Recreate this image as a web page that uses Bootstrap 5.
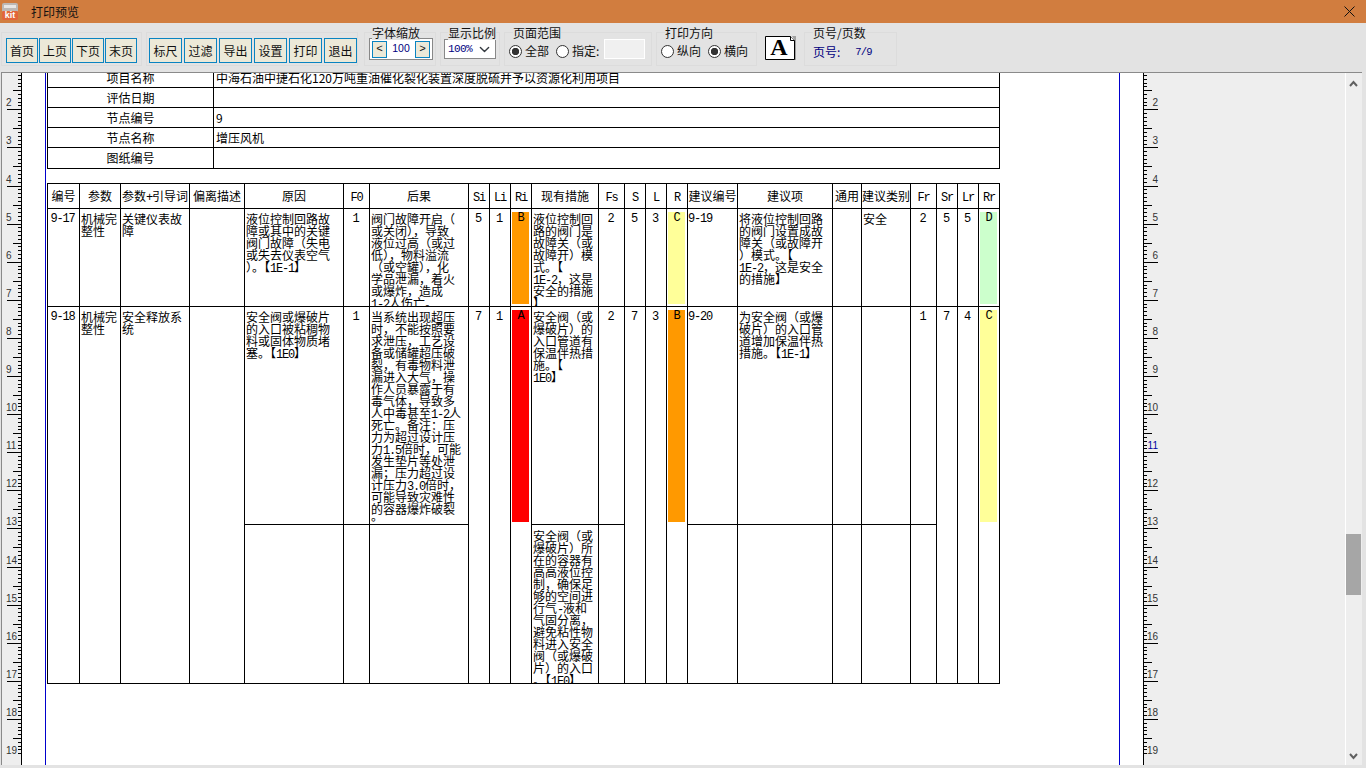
<!DOCTYPE html>
<html lang="zh-CN">
<head>
<meta charset="utf-8">
<title>打印预览</title>
<link href="https://cdn.jsdelivr.net/npm/bootstrap@5.3.0/dist/css/bootstrap.min.css" rel="stylesheet">
<style>
html,body{height:768px;overflow:hidden}
body{background:#e3e3e3;color:#111;font:12px/16px "Noto Sans CJK SC",sans-serif;width:1366px}
.titlebar{height:23px;background:#d17d3f}
.kit-i{margin-left:2px}
.titlebar .ttl{margin-left:13px}
.kit-x{margin-left:auto;margin-right:11px}
.toolbar{height:49px;padding:9px 0 0 1px}
.grp{position:relative;height:34px;border:1px solid #dcdcdc}
.grp-legend{position:absolute;top:-7px;background:#e3e3e3;line-height:14px;white-space:nowrap;color:#111}
.g1{width:141px;margin-right:4px;padding-left:4px;gap:1px}
.g2{width:212px;margin-right:6px;padding-left:2px;gap:2px}
.g3{width:72px;margin-right:4px;padding-left:4px}
.g4{width:60px;margin-right:4px;padding-left:3px}
.g5{width:148px;margin-right:4px;padding-left:4px}
.g6{width:101px;margin-right:8px;padding-left:4px}
.g7{width:93px;margin-left:7px;padding:11px 0 0 8px;color:#000080}
.g-a{width:32px;margin-top:4px;height:25px}
.lg3{left:7px}.lg4{left:7px}.lg5{left:8px}.lg6{left:8px}.lg7{left:8px}
.tbtn{--bs-btn-padding-x:0;--bs-btn-padding-y:0;--bs-btn-font-size:12px;--bs-btn-border-radius:0;--bs-btn-color:#111;--bs-btn-bg:#ece9d8;--bs-btn-border-color:#0a84c1;--bs-btn-line-height:1;height:25px;margin-top:5px;flex:none}
.tw32{width:32px}.tw33{width:33px}
.zoombox{width:64px;height:22px;margin-top:5px;border:1px solid #888;background:#fff;padding:2px;color:#000080;font:10.5px/14px "Liberation Sans",sans-serif}
.zbtn{--bs-btn-padding-x:0;--bs-btn-padding-y:0;--bs-btn-font-size:11px;--bs-btn-border-radius:0;--bs-btn-color:#111;--bs-btn-bg:#ece9d8;--bs-btn-border-color:#0a84c1;width:15px;height:17px;line-height:13px;font-family:"Liberation Mono",monospace}
.pct{width:52px;height:20px;margin-top:6px;padding:0 0 0 3px;border:1px solid #888;border-radius:0;font:11px/18px "Liberation Mono",monospace;letter-spacing:-.6px;color:#000080;background-position:right 5px center;background-size:11px}
.rd{width:13px;height:13px;margin:0;flex:none;border:1px solid #333;background-color:#fff}
.rd:checked{background-color:#fff;border-color:#333;background-image:radial-gradient(circle,#333 3.4px,transparent 4px)}
.rd:focus{box-shadow:none;border-color:#333}
.rdrow{margin-top:10px;height:16px}
.spec{width:41px;height:20px;padding:0;margin:6px 0 0 5px;background:#f0f0f0;border:1px solid #fff;border-radius:0}
.rg3{gap:3px}.rgap{margin-right:4px}
.pgno{margin-left:15px;font:10.5px/16px "Liberation Mono",monospace;letter-spacing:-.8px}
.viewer{margin-left:1px;width:1361px;height:693px;border-top:1px solid #8a8a8a;border-left:1px solid #8a8a8a;overflow:hidden;background:#eee}
.ruler-l{width:20px;flex:none}
.ruler-r{width:202px;flex:none}
.ruler-l svg,.ruler-r svg{display:block}
.rtxt{font:10px "Liberation Sans",sans-serif;fill:#333}
.sheet{width:1121px;flex:none;background:#fff;overflow:hidden}
.pagebox{width:1075px;height:760px;margin:-6px 0 0 23px;padding-left:1px;border-left:1px solid #00c;border-right:1px solid #00c}
.vscroll{width:17px;flex:none;border-left:1px solid #fff;padding-top:7px}
.vscroll svg{display:block;margin-left:3px}
.thumb{width:15px;height:61px;margin:447px 0 158px;background:#a6a6a6}
table.rpt{table-layout:fixed;border-collapse:collapse;width:953px;color:#000}
table.rpt td{border:1px solid #000;padding:0;vertical-align:top;white-space:nowrap;line-height:12px}
table.info{margin-bottom:14px;line-height:16px}
table.info td{height:20px;vertical-align:middle;line-height:16px}
table.info tr:last-child td{height:21px}
table.info td+td{padding-left:2px}
table.main tr.hd td{height:25px;vertical-align:middle;text-align:center}
.lt{font:12px/12px "Liberation Mono",monospace;letter-spacing:-1.2px}
span.lt{line-height:0}
.cb{overflow:hidden;padding:4px 0 0 1px}
.cb.lt{padding-left:0}
.cb.ctr{padding-right:2px}
.tall1 .cb{height:97px}
.tall2 .cb{height:217px}
.tall3 .cb{height:158px;padding-top:5px}
.enddot{vertical-align:5px;line-height:0}
.ctr{text-align:center}
.bar{margin:3px 2px 0 1px;text-align:center}
.tall1 .bar{height:92px}
.tall2 .bar{height:212px}
.c-a{background:#f00}.c-b{background:#f90}.c-c{background:#ff9}.c-d{background:#cfc}
tr.tall2 td.open{border-bottom:0}
tr.tall3 td.open{border-top:0}
</style>
</head>
<body>
<div class="titlebar d-flex align-items-center">
  <svg class="kit-i" width="16" height="17" viewBox="0 0 16 17"><rect x="0" y="0" width="16" height="17" rx="2" fill="#bdb8b4"/><rect x="2" y="2" width="12" height="3" fill="#e8e6e4"/><rect x="0" y="8" width="16" height="9" rx="1" fill="#e2653a"/><text x="8" y="15" text-anchor="middle" font-family="Liberation Sans" font-weight="700" font-size="9" fill="#fff">kit</text></svg>
  <span class="ttl">打印预览</span>
  <svg class="kit-x" width="11" height="11" viewBox="0 0 11 11"><path d="M.5.5l10 10M10.5.5l-10 10" stroke="#111" fill="none"/></svg>
</div>

<div class="toolbar d-flex">
  <div class="grp g1 d-flex">
    <button class="btn tbtn tw32">首页</button><button class="btn tbtn tw32">上页</button><button class="btn tbtn tw32">下页</button><button class="btn tbtn tw32">末页</button>
  </div>
  <div class="grp g2 d-flex">
    <button class="btn tbtn tw33">标尺</button><button class="btn tbtn tw33">过滤</button><button class="btn tbtn tw33">导出</button><button class="btn tbtn tw33">设置</button><button class="btn tbtn tw33">打印</button><button class="btn tbtn tw33">退出</button>
  </div>
  <div class="grp g3">
    <span class="grp-legend lg3">字体缩放</span>
    <div class="zoombox d-flex justify-content-between">
      <button class="btn zbtn">&lt;</button><span>100</span><button class="btn zbtn">&gt;</button>
    </div>
  </div>
  <div class="grp g4">
    <span class="grp-legend lg4">显示比例</span>
    <select class="form-select pct"><option>100%</option></select>
  </div>
  <div class="grp g5 d-flex">
    <span class="grp-legend lg5">页面范围</span>
    <div class="rdrow d-flex align-items-center rg3">
      <input class="form-check-input rd" type="radio" name="pr" checked><span class="rgap">全部</span>
      <input class="form-check-input rd" type="radio" name="pr"><span>指定:</span>
    </div>
    <input class="form-control spec" type="text">
  </div>
  <div class="grp g6">
    <span class="grp-legend lg6">打印方向</span>
    <div class="rdrow d-flex align-items-center rg3">
      <input class="form-check-input rd" type="radio" name="or"><span class="rgap">纵向</span>
      <input class="form-check-input rd" type="radio" name="or" checked><span>横向</span>
    </div>
  </div>
  <svg class="g-a" viewBox="0 0 32 25"><path d="M27 0h4v24H2v-1h28V5z" fill="#a0a0a0"/><path d="M.5 .5h25l4 4v19H.5z" fill="#fff" stroke="#000"/><path d="M25.5 .5v4h4" fill="#fff" stroke="#000"/><text x="14" y="19" text-anchor="middle" font-family="Liberation Serif" font-weight="700" font-size="24" fill="#000">A</text></svg>
  <div class="grp g7 d-flex">
    <span class="grp-legend lg7">页号/页数</span>
    <span>页号:</span><span class="pgno">7/9</span>
  </div>
</div>

<div class="viewer d-flex">
  <div class="ruler-l"><svg id="rl" width="20" height="692"></svg></div>
  <div class="sheet">
    <div class="pagebox">
      <table class="rpt info">
        <colgroup><col style="width:166px"><col></colgroup>
        <tr><td class="ctr">项目名称</td><td>中海石油中捷石化120万吨重油催化裂化装置深度脱硫并予以资源化利用项目</td></tr>
        <tr><td class="ctr">评估日期</td><td></td></tr>
        <tr><td class="ctr">节点编号</td><td>9</td></tr>
        <tr><td class="ctr">节点名称</td><td>增压风机</td></tr>
        <tr><td class="ctr">图纸编号</td><td></td></tr>
      </table>
      <table class="rpt main">
        <colgroup>
          <col style="width:32px"><col style="width:41px"><col style="width:69px"><col style="width:55px"><col style="width:99px"><col style="width:26px"><col style="width:99px"><col style="width:21px"><col style="width:21px"><col style="width:21px"><col style="width:67px"><col style="width:26px"><col style="width:21px"><col style="width:21px"><col style="width:21px"><col style="width:50px"><col style="width:95px"><col style="width:29px"><col style="width:49px"><col style="width:26px"><col style="width:21px"><col style="width:21px"><col style="width:21px">
        </colgroup>
        <tr class="hd">
          <td>编号</td><td>参数</td><td>参数<span class="lt">+</span>引导词</td><td>偏离描述</td><td>原因</td><td><span class="lt">F0</span></td><td>后果</td><td><span class="lt">Si</span></td><td><span class="lt">Li</span></td><td><span class="lt">Ri</span></td><td>现有措施</td><td><span class="lt">Fs</span></td><td><span class="lt">S</span></td><td><span class="lt">L</span></td><td><span class="lt">R</span></td><td>建议编号</td><td>建议项</td><td>通用</td><td>建议类别</td><td><span class="lt">Fr</span></td><td><span class="lt">Sr</span></td><td><span class="lt">Lr</span></td><td><span class="lt">Rr</span></td>
        </tr>
        <tr class="tall1">
          <td><div class="cb ctr lt">9-17</div></td>
          <td><div class="cb">机械完<br>整性</div></td>
          <td><div class="cb">关键仪表故<br>障</div></td>
          <td></td>
          <td><div class="cb">液位控制回路故<br>障或其中的关键<br>阀门故障（失电<br>或失去仪表空气<br>）。【<span class="lt">1E-1</span>】</div></td>
          <td><div class="cb ctr lt">1</div></td>
          <td><div class="cb">阀门故障开启（<br>或关闭），导致<br>液位过高（或过<br>低），物料溢流<br>（或空罐），化<br>学品泄漏，着火<br>或爆炸，造成<br><span class="lt">1-2</span>人伤亡。</div></td>
          <td><div class="cb ctr lt">5</div></td>
          <td><div class="cb ctr lt">1</div></td>
          <td><div class="bar c-b lt">B</div></td>
          <td><div class="cb">液位控制回<br>路的阀门是<br>故障关（或<br>故障开）模<br>式。【<br><span class="lt">1E-2</span>，这是<br>安全的措施<br>】</div></td>
          <td><div class="cb ctr lt">2</div></td>
          <td><div class="cb ctr lt">5</div></td>
          <td><div class="cb ctr lt">3</div></td>
          <td><div class="bar c-c lt">C</div></td>
          <td><div class="cb lt">9-19</div></td>
          <td><div class="cb">将液位控制回路<br>的阀门设置成故<br>障关（或故障开<br>）模式。【<br><span class="lt">1E-2</span>，这是安全<br>的措施】</div></td>
          <td></td>
          <td><div class="cb">安全</div></td>
          <td><div class="cb ctr lt">2</div></td>
          <td><div class="cb ctr lt">5</div></td>
          <td><div class="cb ctr lt">5</div></td>
          <td><div class="bar c-d lt">D</div></td>
        </tr>
        <tr class="tall2">
          <td class="open"><div class="cb ctr lt">9-18</div></td>
          <td class="open"><div class="cb">机械完<br>整性</div></td>
          <td class="open"><div class="cb">安全释放系<br>统</div></td>
          <td class="open"></td>
          <td><div class="cb">安全阀或爆破片<br>的入口被粘稠物<br>料或固体物质堵<br>塞。【<span class="lt">1E0</span>】</div></td>
          <td><div class="cb ctr lt">1</div></td>
          <td><div class="cb">当系统出现超压<br>时，不能按照要<br>求泄压，工艺设<br>备或储罐超压破<br>裂，有毒物料泄<br>漏进入大气，操<br>作人员暴露于有<br>毒气体，导致多<br>人中毒甚至<span class="lt">1-2</span>人<br>死亡。备注：压<br>力为超过设计压<br>力<span class="lt">1.5</span>倍时，可能<br>发生垫片等处泄<br>漏；压力超过设<br>计压力<span class="lt">3.0</span>倍时，<br>可能导致灾难性<br>的容器爆炸破裂<br><span class="enddot">。</span></div></td>
          <td class="open"><div class="cb ctr lt">7</div></td>
          <td class="open"><div class="cb ctr lt">1</div></td>
          <td class="open"><div class="bar c-a lt">A</div></td>
          <td><div class="cb">安全阀（或<br>爆破片）的<br>入口管道有<br>保温伴热措<br>施。【<br><span class="lt">1E0</span>】</div></td>
          <td><div class="cb ctr lt">2</div></td>
          <td class="open"><div class="cb ctr lt">7</div></td>
          <td class="open"><div class="cb ctr lt">3</div></td>
          <td class="open"><div class="bar c-b lt">B</div></td>
          <td><div class="cb lt">9-20</div></td>
          <td><div class="cb">为安全阀（或爆<br>破片）的入口管<br>道增加保温伴热<br>措施。【<span class="lt">1E-1</span>】</div></td>
          <td></td>
          <td></td>
          <td><div class="cb ctr lt">1</div></td>
          <td class="open"><div class="cb ctr lt">7</div></td>
          <td class="open"><div class="cb ctr lt">4</div></td>
          <td class="open"><div class="bar c-c lt">C</div></td>
        </tr>
        <tr class="tall3">
          <td class="open"></td><td class="open"></td><td class="open"></td><td class="open"></td>
          <td></td><td></td><td></td>
          <td class="open"></td><td class="open"></td><td class="open"></td>
          <td><div class="cb">安全阀（或<br>爆破片）所<br>在的容器有<br>高高液位控<br>制，确保足<br>够的空间进<br>行气<span class="lt">-</span>液和<br>气固分离，<br>避免粘性物<br>料进入安全<br>阀（或爆破<br>片）的入口<br>。【<span class="lt">1E0</span>】</div></td>
          <td></td>
          <td class="open"></td><td class="open"></td><td class="open"></td>
          <td></td><td></td><td></td><td></td><td></td>
          <td class="open"></td><td class="open"></td><td class="open"></td>
        </tr>
      </table>
    </div>
  </div>
  <div class="ruler-r"><svg id="rr" width="202" height="692"></svg></div>
  <div class="vscroll">
    <svg width="9" height="7" viewBox="0 0 9 7"><path d="M1 6l3.5-4L8 6" fill="none" stroke="#606060" stroke-width="2"/></svg>
    <div class="thumb"></div>
    <svg width="9" height="7" viewBox="0 0 9 7"><path d="M1 1l3.5 4L8 1" fill="none" stroke="#606060" stroke-width="2"/></svg>
  </div>
</div>
<script>
(function(){
  var NS='http://www.w3.org/2000/svg';
  function build(id,left){
    var s=document.getElementById(id),d='',h=692;
    d+=left?'M19.5 0V'+h:'M.5 0V'+h;
    for(var i=0;i<190;i++){
      var y=Math.round(33.1-73+3.81*i)+.5;
      if(y<0||y>h)continue;
      var l=i%10==0?14:(i%5==0?8:3);
      d+=left?'M19 '+y+'H'+(19-l):'M1 '+y+'H'+(1+l);
    }
    var p=document.createElementNS(NS,'path');
    p.setAttribute('d',d);p.setAttribute('stroke','#000');p.setAttribute('fill','none');
    s.appendChild(p);
    for(var n=2;n<=19;n++){
      var t=document.createElementNS(NS,'text');
      t.setAttribute('class','rtxt');
      t.setAttribute('x',left?4:15);
      if(!left)t.setAttribute('text-anchor','end');
      t.setAttribute('y',Math.round(36.3+38.1*(n-2)-3));
      if(!left&&n==11)t.setAttribute('style','fill:#0000a0');
      t.textContent=n;
      s.appendChild(t);
    }
  }
  build('rl',true);build('rr',false);
})();
</script>
<script src="https://cdn.jsdelivr.net/npm/bootstrap@5.3.0/dist/js/bootstrap.bundle.min.js"></script>
</body>
</html>
